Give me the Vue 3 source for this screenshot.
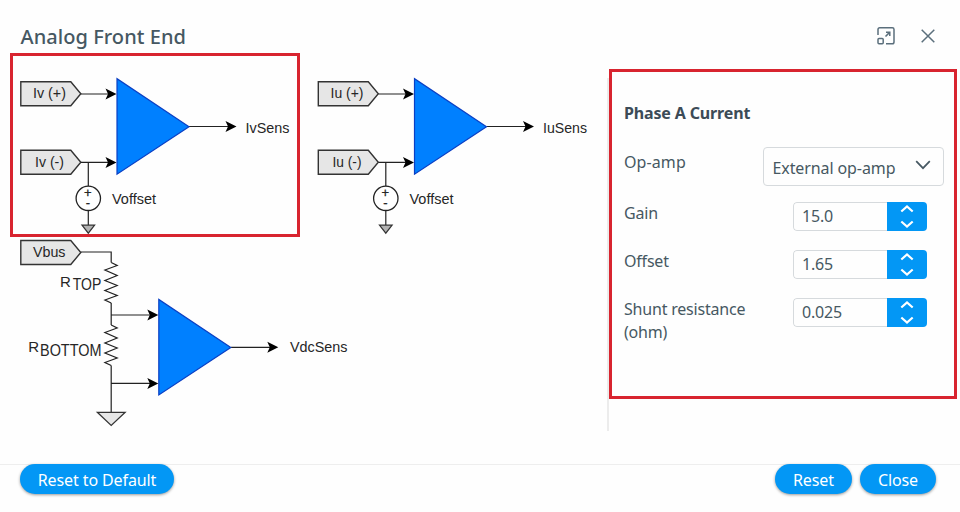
<script setup>
import { ref } from 'vue'

const phases = [
  { id: 'v', x: 0 },
  { id: 'u', x: 297.5 },
]

const fields = ref([
  { label: 'Gain', value: '15.0' },
  { label: 'Offset', value: '1.65' },
  { label: 'Shunt resistance (ohm)', value: '0.025' },
])
</script>

<template>
  <div class="dialog">
    <header class="header">
      <h1 class="title">Analog Front End</h1>
      <div class="tools">
        <svg class="expand" width="20" height="20" viewBox="0 0 20 20">
          <path d="M2 9V3.5Q2 1.8 3.7 1.8H16.3Q18 1.8 18 3.5V16Q18 17.8 16.3 17.8H10" />
          <rect x="2" y="12.4" width="5.2" height="5.4" rx="1" />
          <path d="M9.5 10.5L13.6 6.4M10 6.2H13.8V10" />
        </svg>
        <svg class="cross" width="16" height="16" viewBox="0 0 16 16">
          <path d="M1.7 1.7L14.3 14.3M14.3 1.7L1.7 14.3" />
        </svg>
      </div>
    </header>

    <main class="body">
      <svg class="diagram" width="607" height="365" viewBox="0 70 607 365">
        <defs>
          <path id="tag" class="tag" d="M0.5 0.5H50.5L60.5 12.5L50.5 24.5H0.5Z" />
          <path id="amp" class="amp" d="M0 0V95.5L72 48Z" />
          <path id="head" d="M0 0L-11 -5.5L-8.5 0L-11 5.5Z" />
          <path id="zigzag" class="wire" d="M0 0L6 3L-6.3 7.5L6 13L-6.3 18L6 23L-6.3 28L6 33L-6.3 37.5L0 40.5" />
        </defs>

        <g v-for="p in phases" :key="p.id" :transform="`translate(${p.x} 0)`">
          <use href="#tag" x="20.3" y="81.3" />
          <use href="#tag" x="20.3" y="149.7" />
          <path class="wire" d="M81 94H110M81 162.4H110M88.3 162.4V186M88.3 210V225M189 126.5H230" />
          <use href="#amp" x="117" y="78.7" />
          <use href="#head" x="116.5" y="94" />
          <use href="#head" x="116.5" y="162.4" />
          <use href="#head" x="236.5" y="126.5" />
          <circle class="source" cx="88.3" cy="198.3" r="12.2" />
          <path class="ground small" d="M82 225.2H94.6L88.3 233.2Z" />
          <text x="33" y="98" textLength="33" lengthAdjust="spacingAndGlyphs">I{{ p.id }} (+)</text>
          <text x="35" y="167" textLength="29" lengthAdjust="spacingAndGlyphs">I{{ p.id }} (-)</text>
          <text x="245.5" y="132.6" textLength="44" lengthAdjust="spacingAndGlyphs">I{{ p.id }}Sens</text>
          <text x="112" y="204" textLength="44" lengthAdjust="spacingAndGlyphs">Voffset</text>
          <text class="sign" x="84" y="197.3">+</text>
          <text class="sign" x="85.8" y="207.3">-</text>
        </g>

        <use href="#tag" x="20.3" y="240" />
        <path class="wire" d="M81 252H111.2V262.5M111.2 303V325M111.2 365.5V412M111.2 315H152M111.2 383.4H152M231 347.3H272" />
        <use href="#zigzag" x="111.2" y="262.5" />
        <use href="#zigzag" x="111.2" y="325" />
        <use href="#amp" x="158.8" y="299.4" />
        <use href="#head" x="158.3" y="315" />
        <use href="#head" x="158.3" y="383.4" />
        <use href="#head" x="278.3" y="347.3" />
        <path class="ground" d="M97.3 412.3H125.2L111.2 425.5Z" />
        <text x="33" y="257" textLength="32.5" lengthAdjust="spacingAndGlyphs">Vbus</text>
        <text x="60" y="287.3">R</text>
        <text class="sub" x="72.8" y="290.3" textLength="28.5" lengthAdjust="spacingAndGlyphs">TOP</text>
        <text x="28.3" y="352">R</text>
        <text class="sub" x="40" y="356" textLength="61.5" lengthAdjust="spacingAndGlyphs">BOTTOM</text>
        <text x="290" y="352" textLength="57.5" lengthAdjust="spacingAndGlyphs">VdcSens</text>
      </svg>

      <div class="divider"></div>

      <section class="panel">
        <h2 class="heading">Phase A Current</h2>
        <div class="row select-row">
          <span class="label">Op-amp</span>
          <div class="select">
            <span>External op-amp</span>
            <svg width="16" height="10" viewBox="0 0 16 10"><path d="M1.2 1.2L8 8.2L14.8 1.2" /></svg>
          </div>
        </div>
        <div v-for="f in fields" :key="f.label" class="row">
          <span class="label">{{ f.label }}</span>
          <div class="number">
            <span class="value">{{ f.value }}</span>
            <div class="stepper">
              <svg width="14" height="8" viewBox="0 0 14 8"><path d="M1.3 6.5L7 1.5L12.7 6.5" /></svg>
              <svg width="14" height="8" viewBox="0 0 14 8"><path d="M1.3 1.5L7 6.5L12.7 1.5" /></svg>
            </div>
          </div>
        </div>
      </section>
    </main>

    <footer class="footer">
      <button class="btn wide">Reset to Default</button>
      <div class="actions">
        <button class="btn reset">Reset</button>
        <button class="btn close">Close</button>
      </div>
    </footer>

    <div class="highlight"></div>
  </div>
</template>

<style>
body {
  background: #fff;
}
</style>

<style scoped>
.dialog {
  position: relative;
  box-sizing: border-box;
  width: 960px;
  height: 512px;
  display: flex;
  flex-direction: column;
  overflow: hidden;
  background: #fefefe;
  color: #465862;
  font-family: 'Noto Sans', 'Open Sans', sans-serif;
  font-size: 16px;
  letter-spacing: -0.2px;
}
.header {
  height: 69px;
  box-sizing: border-box;
  padding: 5px 24px 0 20.5px;
  display: flex;
  justify-content: space-between;
  align-items: center;
}
.title {
  margin: 0;
  font-size: 20px;
  font-weight: 500;
  line-height: 28px;
  letter-spacing: 0.05px;
}
.tools {
  display: flex;
  align-items: center;
  gap: 24px;
  padding-bottom: 2px;
}
.tools svg {
  fill: none;
  stroke: #5b6f7c;
  stroke-width: 1.5;
}
.body {
  height: 395px;
  display: flex;
  align-items: flex-start;
}
.diagram {
  display: block;
  margin-top: 1px;
  flex: none;
}
.diagram text {
  font-family: 'Liberation Sans', Arial, sans-serif;
  font-size: 15px;
  letter-spacing: 0;
  fill: #262626;
}
.diagram .sub {
  font-size: 16.5px;
}
.diagram .sign {
  font-size: 13px;
  stroke: #262626;
  stroke-width: 0.3;
}
.wire {
  fill: none;
  stroke: #222;
  stroke-width: 1.2;
}
.tag {
  fill: #e6e6e6;
  stroke: #333;
  stroke-width: 1.4;
}
.amp {
  fill: #0080ff;
  stroke: #0a3fc4;
  stroke-width: 1.2;
}
.source {
  fill: #fff;
  stroke: #222;
  stroke-width: 1.3;
}
.ground {
  fill: #e6e6e6;
  stroke: #333;
  stroke-width: 1.2;
}
.ground.small {
  fill: #b3b3b3;
}
.divider {
  width: 2px;
  height: 353px;
  margin-top: 9px;
  background: #ececec;
}
.panel {
  box-sizing: border-box;
  width: 348px;
  height: 330px;
  border: 3px solid #d8242f;
  padding: 29px 10px 0 12px;
}
.heading {
  margin: 0 0 22px;
  font-size: 16px;
  line-height: 24px;
  font-weight: 700;
  letter-spacing: -0.15px;
  color: #3c4b57;
}
.row {
  display: flex;
  justify-content: space-between;
  align-items: flex-start;
  height: 48px;
  padding-right: 17px;
}
.row.select-row {
  height: 54px;
  padding-right: 0;
}
.label {
  width: 130px;
  line-height: 23px;
  margin-top: 1px;
}
.select-row .label {
  margin-top: 4px;
  letter-spacing: 0.1px;
}
.select {
  box-sizing: border-box;
  width: 181px;
  height: 39px;
  border: 1.5px solid #d6dadd;
  border-radius: 4px;
  padding: 3px 12px 0 8.5px;
  display: flex;
  align-items: center;
  justify-content: space-between;
  letter-spacing: -0.1px;
}
.select svg {
  fill: none;
  stroke: #465862;
  stroke-width: 1.7;
  margin-top: -7px;
}
.number {
  width: 134px;
  height: 29px;
  margin-top: 0.5px;
  display: flex;
  border-radius: 4px;
  overflow: hidden;
}
.value {
  box-sizing: border-box;
  flex: 1;
  border: 1px solid #d6dadd;
  border-right: 0;
  border-radius: 4px 0 0 4px;
  padding-left: 8px;
  line-height: 27px;
}
.stepper {
  width: 40px;
  background: #0397f5;
  display: flex;
  flex-direction: column;
  align-items: center;
  justify-content: space-between;
  padding: 3.5px 0 3px;
  box-sizing: border-box;
}
.stepper svg {
  fill: none;
  stroke: #fff;
  stroke-width: 2.2;
}
.footer {
  box-sizing: border-box;
  height: 48px;
  border-top: 1px solid #eee;
  padding: 0 24px 0 20px;
  display: flex;
  justify-content: space-between;
  align-items: flex-start;
}
.actions {
  display: flex;
  gap: 8px;
}
.btn {
  height: 30px;
  margin-top: -1px;
  border: 0;
  border-radius: 15px;
  padding: 2px 0 0;
  background: #0397f5;
  color: #fff;
  font: inherit;
  line-height: 24px;
  letter-spacing: -0.1px;
  box-shadow: 0 1px 3px rgba(0, 0, 0, 0.4);
}
.wide {
  width: 154px;
}
.reset {
  width: 77px;
}
.close {
  width: 76px;
}
.highlight {
  position: absolute;
  box-sizing: border-box;
  left: 10px;
  top: 53px;
  width: 290px;
  height: 184px;
  border: 3px solid #d8242f;
}
</style>
